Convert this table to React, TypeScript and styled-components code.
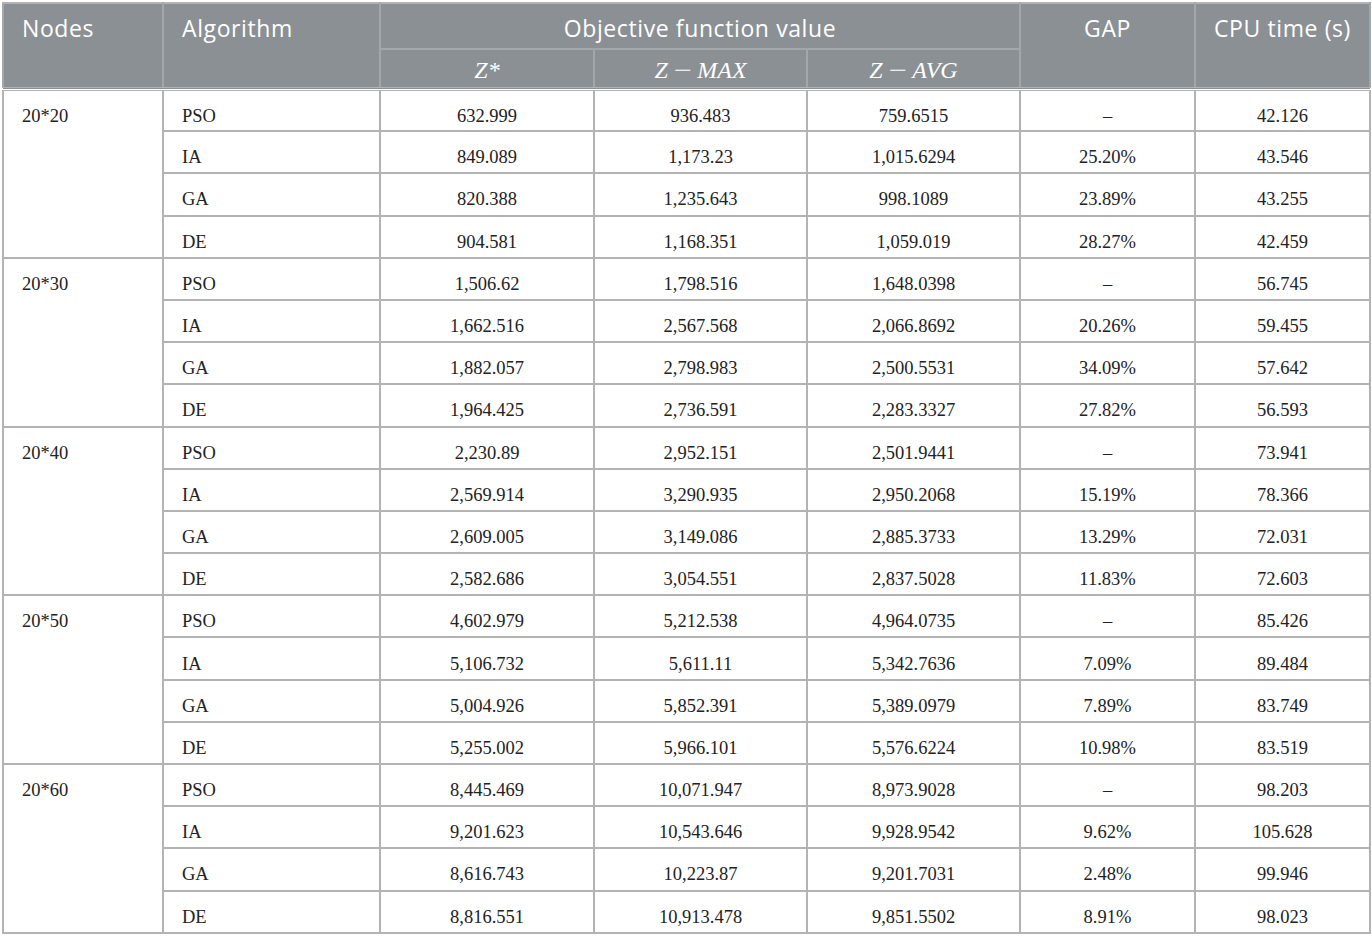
import { FC } from 'react'
import styled, { createGlobalStyle } from 'styled-components'

const GlobalStyle = createGlobalStyle`
  html, body {
    margin: 0;
    padding: 0;
    background: #ffffff;
  }
  body {
    padding: 2px 0 0 2px;
  }
`

type Row = [string, string, string, string, string]

interface Group {
  nodes: string
  rows: Row[]
}

const algorithms = ['PSO', 'IA', 'GA', 'DE']

const groups: Group[] = [
  {
    nodes: '20*20',
    rows: [
      ['632.999', '936.483', '759.6515', '–', '42.126'],
      ['849.089', '1,173.23', '1,015.6294', '25.20%', '43.546'],
      ['820.388', '1,235.643', '998.1089', '23.89%', '43.255'],
      ['904.581', '1,168.351', '1,059.019', '28.27%', '42.459']
    ]
  },
  {
    nodes: '20*30',
    rows: [
      ['1,506.62', '1,798.516', '1,648.0398', '–', '56.745'],
      ['1,662.516', '2,567.568', '2,066.8692', '20.26%', '59.455'],
      ['1,882.057', '2,798.983', '2,500.5531', '34.09%', '57.642'],
      ['1,964.425', '2,736.591', '2,283.3327', '27.82%', '56.593']
    ]
  },
  {
    nodes: '20*40',
    rows: [
      ['2,230.89', '2,952.151', '2,501.9441', '–', '73.941'],
      ['2,569.914', '3,290.935', '2,950.2068', '15.19%', '78.366'],
      ['2,609.005', '3,149.086', '2,885.3733', '13.29%', '72.031'],
      ['2,582.686', '3,054.551', '2,837.5028', '11.83%', '72.603']
    ]
  },
  {
    nodes: '20*50',
    rows: [
      ['4,602.979', '5,212.538', '4,964.0735', '–', '85.426'],
      ['5,106.732', '5,611.11', '5,342.7636', '7.09%', '89.484'],
      ['5,004.926', '5,852.391', '5,389.0979', '7.89%', '83.749'],
      ['5,255.002', '5,966.101', '5,576.6224', '10.98%', '83.519']
    ]
  },
  {
    nodes: '20*60',
    rows: [
      ['8,445.469', '10,071.947', '8,973.9028', '–', '98.203'],
      ['9,201.623', '10,543.646', '9,928.9542', '9.62%', '105.628'],
      ['8,616.743', '10,223.87', '9,201.7031', '2.48%', '99.946'],
      ['8,816.551', '10,913.478', '9,851.5502', '8.91%', '98.023']
    ]
  }
]

const widths = [160, 217, 214, 213, 213, 175, 175]

const MathLabel: FC<{ suffix: string }> = ({ suffix }) => (
  <Math>
    Z<Minus>−</Minus>
    {suffix}
  </Math>
)

export default function App() {
  return (
    <>
      <GlobalStyle />
      <Table>
        <colgroup>
          {widths.map((w, i) => (
            <col key={i} style={{ width: w }} />
          ))}
        </colgroup>
        <thead>
          <HeadRowTop>
            <HeadCell rowSpan={2} $align="left" $edge>
              Nodes
            </HeadCell>
            <HeadCell rowSpan={2} $align="left" $edge>
              Algorithm
            </HeadCell>
            <HeadCell colSpan={3}>Objective function value</HeadCell>
            <HeadCell rowSpan={2} $edge>
              GAP
            </HeadCell>
            <HeadCell rowSpan={2} $edge>
              CPU time (s)
            </HeadCell>
          </HeadRowTop>
          <HeadRowSub>
            <SubCell>
              <Math>Z*</Math>
            </SubCell>
            <SubCell>
              <MathLabel suffix="MAX" />
            </SubCell>
            <SubCell>
              <MathLabel suffix="AVG" />
            </SubCell>
          </HeadRowSub>
        </thead>
        <tbody>
          {groups.map((g) =>
            g.rows.map((r, i) => (
              <BodyRow key={g.nodes + i}>
                {i === 0 && (
                  <Cell rowSpan={4} $align="left" $top>
                    {g.nodes}
                  </Cell>
                )}
                <Cell $align="left">{algorithms[i]}</Cell>
                {r.map((v, j) => (
                  <Cell key={j}>{v}</Cell>
                ))}
              </BodyRow>
            ))
          )}
        </tbody>
      </Table>
    </>
  )
}

const Table = styled.table`
  border-collapse: collapse;
  table-layout: fixed;
  width: 1367px;
  border: 2px solid #b3b3b3;
`

const HeadRowTop = styled.tr`
  height: 46px;
`

const HeadRowSub = styled.tr`
  height: 40px;
`

const HeadCell = styled.th<{ $align?: 'left' | 'center'; $edge?: boolean }>`
  background: #8b9094;
  color: #ffffff;
  font-family: 'Open Sans', 'Noto Sans', sans-serif;
  font-weight: 400;
  font-size: 23px;
  letter-spacing: 0.6px;
  line-height: 28px;
  text-align: ${(p) => p.$align ?? 'center'};
  vertical-align: top;
  padding: 10px 18px 0;
  border: 2px solid #a3a7aa;
  border-top-color: #b3b3b3;
  ${(p) => (p.$edge ? 'border-bottom: 4px double #b3b3b3;' : '')}
  box-sizing: border-box;
  white-space: nowrap;
`

const SubCell = styled.th`
  background: #8b9094;
  color: #ffffff;
  font-family: 'Liberation Serif', 'Times New Roman', serif;
  font-weight: 400;
  font-size: 24px;
  line-height: 28px;
  text-align: center;
  vertical-align: middle;
  padding: 4px 10px 2px;
  border: 2px solid #a3a7aa;
  border-bottom: 4px double #b3b3b3;
`

const Math = styled.span`
  font-style: italic;
  font-family: 'Liberation Serif', 'Times New Roman', serif;
`

const Minus = styled.span`
  display: inline-block;
  font-style: normal;
  margin: 0 8px;
  transform: scaleX(1.35);
`

const BodyRow = styled.tr`
  height: 42.2px;
`

const Cell = styled.td<{ $align?: 'left' | 'center'; $top?: boolean }>`
  font-family: 'Liberation Serif', 'Times New Roman', serif;
  font-size: 18.5px;
  color: #222222;
  text-align: ${(p) => p.$align ?? 'center'};
  vertical-align: ${(p) => (p.$top ? 'top' : 'middle')};
  padding: ${(p) => (p.$top ? '14px 18px 0' : '10px 18px 0')};
  border: 2px solid #b3b3b3;
  line-height: 22px;
`
